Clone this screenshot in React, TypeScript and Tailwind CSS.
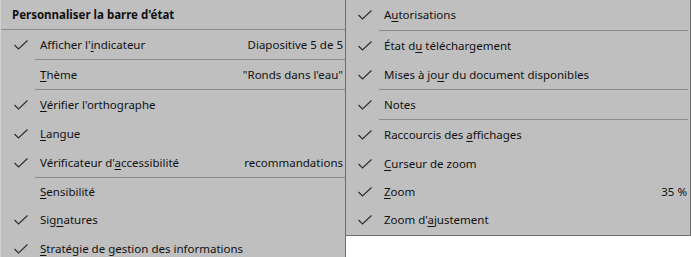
import type { ReactNode } from 'react';

type Item = {
  label: ReactNode;
  checked?: boolean;
  value?: string;
  sepAfter?: boolean;
  short?: boolean;
};

const font = { fontFamily: '"Segoe UI", "Noto Sans", "Open Sans", sans-serif' };

function Check() {
  return (
    <svg width="14" height="10" viewBox="0 0 14 10" className="block">
      <polyline points="0.5,5 4.5,9 13.5,0.5" fill="none" stroke="#2b2b2b" strokeWidth="1.1" />
    </svg>
  );
}

function K({ children }: { children: ReactNode }) {
  return <span className="underline underline-offset-[2px] decoration-[1px]">{children}</span>;
}

const leftItems: Item[] = [
  { label: <>Afficher l'<K>i</K>ndicateur</>, checked: true, value: 'Diapositive 5 de 5', sepAfter: true },
  { label: <><K>T</K>hème</>, value: '"Ronds dans l\'eau"', sepAfter: true },
  { label: <><K>V</K>érifier l'orthographe</>, checked: true },
  { label: <><K>L</K>angue</>, checked: true },
  { label: <>Vérificateur d'<K>a</K>ccessibilité</>, checked: true, value: 'recommandations', sepAfter: true },
  { label: <><K>S</K>ensibilité</>, short: true },
  { label: <>Sig<K>n</K>atures</>, checked: true, short: true },
  { label: <><K>S</K>tratégie de gestion des informations</>, checked: true },
];

const rightItems: Item[] = [
  { label: <>A<K>u</K>torisations</>, checked: true, sepAfter: true },
  { label: <>État d<K>u</K> téléchargement</>, checked: true },
  { label: <>Mises à jo<K>u</K>r du document disponibles</>, checked: true, sepAfter: true },
  { label: <>Notes</>, checked: true, sepAfter: true },
  { label: <>Raccourcis des <K>a</K>ffichages</>, checked: true },
  { label: <><K>C</K>urseur de zoom</>, checked: true },
  { label: <><K>Z</K>oom</>, checked: true, value: '35 %', short: true },
  { label: <>Zoom d'<K>a</K>justement</>, checked: true, short: true },
];

function Row({ item, first, textLeft, sepLeft, valuePad }: { item: Item; first?: boolean; textLeft: string; sepLeft: string; valuePad: string }) {
  const h = first ? 'h-[30px]' : item.short ? 'h-[28px]' : 'h-[29px]';
  return (
    <>
      <div className={`flex items-center ${h} shrink-0 whitespace-nowrap`}>
        <div className={`flex justify-center shrink-0 ${textLeft}`}>{item.checked ? <Check /> : null}</div>
        <div className="flex-1 text-[11.5px] text-[#111]">{item.label}</div>
        {item.value ? <div className={`text-[11.5px] text-[#111] ${valuePad}`}>{item.value}</div> : null}
      </div>
      {item.sepAfter ? <div className={`h-px shrink-0 bg-[#8c8c8c] ${sepLeft}`} /> : null}
    </>
  );
}

export default function App() {
  return (
    <div className="flex w-[691px] h-[257px] overflow-hidden bg-white" style={font}>
      {/* main status bar menu */}
      <div className="flex flex-col w-[346px] h-[257px] shrink-0 bg-[#bfbfbf] border-l border-l-[#d2d2d2] border-r border-r-[#6e6e6e] overflow-hidden">
        <div className="flex items-center h-[29px] shrink-0 pl-[11px] text-[11.5px] font-bold text-[#111]">
          Personnaliser la barre d'état
        </div>
        <div className="h-px shrink-0 bg-[#8c8c8c]" />
        {leftItems.map((it, i) => (
          <Row key={i} item={it} textLeft="w-[39px]" sepLeft="ml-[34px]" valuePad="pr-[2px]" />
        ))}
      </div>

      {/* overflowing submenu */}
      <div className="flex flex-col w-[345px] h-[236px] shrink-0 self-start bg-[#bfbfbf] border-r border-r-[#6e6e6e] border-b border-b-[#6e6e6e] overflow-hidden">
        {rightItems.map((it, i) => (
          <Row key={i} item={it} first={i === 0} textLeft="w-[38px]" sepLeft="ml-[33px] mr-[2px]" valuePad="pr-[3px]" />
        ))}
      </div>
    </div>
  );
}
